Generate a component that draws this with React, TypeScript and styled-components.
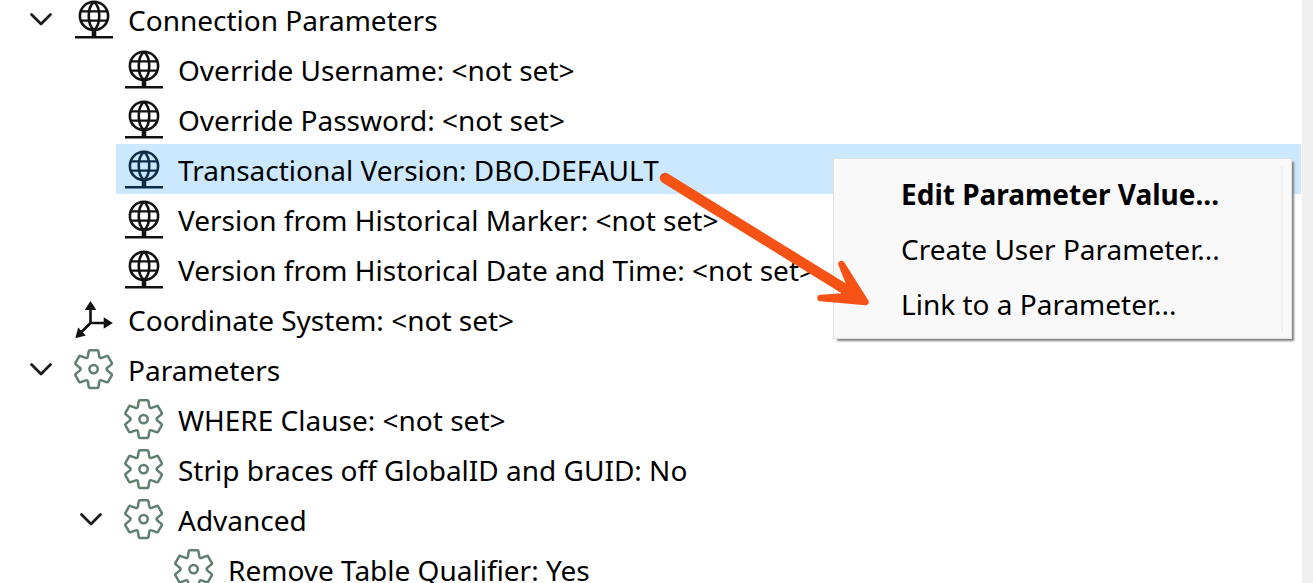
import React from "react";
import styled, { createGlobalStyle } from "styled-components";

const GlobalStyle = createGlobalStyle`
  * { box-sizing: border-box; }
  body {
    margin: 0;
    overflow: hidden;
    background: #ffffff;
    color: #000000;
    font-family: "Noto Sans", "Open Sans", sans-serif;
    font-size: 28px;
    line-height: 50px;
  }
`;

const Panel = styled.main`
  position: relative;
  display: flex;
  height: 100vh;
  overflow: hidden;
`;

const TreePane = styled.div`
  flex: 1;
  min-width: 0;
  overflow: hidden;
  padding: 0 1px 0 16px;
`;

const ScrollTrack = styled.div`
  flex: none;
  width: 11px;
  background: #f0f0f0;
`;

const Tree = styled.ul`
  list-style: none;
  margin: -6px 0 0;
  padding: 0;
`;

const Branch = styled.ul`
  list-style: none;
  margin: 0;
  padding: 0 0 0 50px;
`;

const Row = styled.div`
  display: flex;
  height: 50px;
`;

const ToggleSlot = styled.div`
  flex: none;
  width: 50px;
`;

const Toggle = styled.button`
  display: flex;
  align-items: center;
  justify-content: center;
  width: 50px;
  height: 50px;
  padding: 0;
  border: 0;
  background: none;
  color: #1a1a1a;
`;

const Entry = styled.div<{ $selected?: boolean }>`
  flex: 1;
  display: flex;
  align-items: center;
  gap: 14px;
  padding-left: 8px;
  white-space: nowrap;
  background: ${(p) => (p.$selected ? "#cce8ff" : "transparent")};
  color: ${(p) => (p.$selected ? "#0c2d48" : "#111111")};
`;

const Icon = styled.svg`
  flex: none;
  width: 40px;
  height: 40px;
  overflow: visible;
`;

const Label = styled.span`
  padding-top: 2px;
  color: #000000;
`;

const Menu = styled.div`
  position: absolute;
  left: 833px;
  top: 158px;
  width: 459px;
  padding: 7px 8px;
  border: 1px solid #e2e2e2;
  background: #f9f9f9;
  box-shadow: 3px 3px 2px -1px #808080;
`;

const MenuList = styled.div`
  display: flex;
  flex-direction: column;
  border-right: 2px solid #f0f0f0;
`;

const MenuItem = styled.button<{ $primary?: boolean }>`
  height: 55px;
  padding: 0 0 0 59px;
  border: 0;
  background: none;
  color: #000000;
  font: inherit;
  font-weight: ${(p) => (p.$primary ? 700 : 400)};
  line-height: 50px;
  text-align: left;
  white-space: nowrap;
`;

const Pointer = styled.svg`
  position: absolute;
  left: 650px;
  top: 160px;
  width: 230px;
  height: 160px;
  pointer-events: none;
`;

function Globe() {
  return (
    <Icon viewBox="0 0 40 40" fill="none" stroke="currentColor" strokeWidth="2.6" aria-hidden="true">
      <circle cx="20" cy="16.9" r="14.1" />
      <path d="M20 2.8C13 8.5 13 25.3 20 31M20 2.8C27 8.5 27 25.3 20 31" />
      <path d="M6.5 12.4H33.5M6.5 21.6H33.5" strokeWidth="2.2" />
      <path d="M20 31V38" strokeWidth="4.6" />
      <path d="M1 38.3H39" strokeWidth="2.6" />
    </Icon>
  );
}

function Axes() {
  return (
    <Icon viewBox="0 0 40 40" fill="currentColor" aria-hidden="true">
      <path d="M16.5 6V24H32M16.5 24L7 33.5" fill="none" stroke="currentColor" strokeWidth="2.6" />
      <path d="M16.5 2L22.3 11H10.7ZM38.9 24L29.7 29.8V18.2ZM1.3 39.2L4.2 28.6L11.8 36.6Z" />
    </Icon>
  );
}

const turn = (x: number, y: number, degrees: number) => {
  const a = (degrees * Math.PI) / 180;
  const px = 19.6 + x * Math.cos(a) - y * Math.sin(a);
  const py = 20.1 + x * Math.sin(a) + y * Math.cos(a);
  return `${px.toFixed(2)} ${py.toFixed(2)}`;
};

const gearOutline =
  [0, 60, 120, 180, 240, 300]
    .map(
      (d, i) =>
        `${i ? "" : `M${turn(-5.6, -13.2, 0)}`}L${turn(-4.9, -17.6, d)}Q${turn(-4.7, -18.9, d)} ${turn(-3.6, -18.9, d)}` +
        `L${turn(3.6, -18.9, d)}Q${turn(4.7, -18.9, d)} ${turn(4.9, -17.6, d)}L${turn(5.6, -13.2, d)}` +
        `Q${turn(5.8, -10.1, d)} ${turn(-5.6, -13.2, d + 60)}`
    )
    .join("") + "Z";

function Gear() {
  return (
    <Icon viewBox="0 0 40 40" fill="none" stroke="#5f806f" strokeWidth="2.5" strokeLinejoin="round" aria-hidden="true">
      <path d={gearOutline} />
      <circle cx="19.6" cy="20.1" r="4.2" />
    </Icon>
  );
}

const icons = { globe: Globe, axes: Axes, gear: Gear };

type Node = {
  label: string;
  icon: keyof typeof icons;
  selected?: boolean;
  children?: Node[];
};

const nodes: Node[] = [
  {
    label: "Connection Parameters",
    icon: "globe",
    children: [
      { label: "Override Username: <not set>", icon: "globe" },
      { label: "Override Password: <not set>", icon: "globe" },
      { label: "Transactional Version: DBO.DEFAULT", icon: "globe", selected: true },
      { label: "Version from Historical Marker: <not set>", icon: "globe" },
      { label: "Version from Historical Date and Time: <not set>", icon: "globe" },
    ],
  },
  { label: "Coordinate System: <not set>", icon: "axes" },
  {
    label: "Parameters",
    icon: "gear",
    children: [
      { label: "WHERE Clause: <not set>", icon: "gear" },
      { label: "Strip braces off GlobalID and GUID: No", icon: "gear" },
      {
        label: "Advanced",
        icon: "gear",
        children: [{ label: "Remove Table Qualifier: Yes", icon: "gear" }],
      },
    ],
  },
];

function TreeNode({ node }: { node: Node }) {
  const NodeIcon = icons[node.icon];
  return (
    <li>
      <Row>
        <ToggleSlot>
          {node.children && (
            <Toggle type="button" aria-expanded="true" aria-label={`Collapse ${node.label}`}>
              <svg width="24" height="14" viewBox="0 0 24 14" fill="none" stroke="currentColor" strokeWidth="2.8" strokeLinecap="round" strokeLinejoin="round">
                <path d="M2.5 2.5L12 12L21.5 2.5" />
              </svg>
            </Toggle>
          )}
        </ToggleSlot>
        <Entry $selected={node.selected}>
          <NodeIcon />
          <Label>{node.label}</Label>
        </Entry>
      </Row>
      {node.children && (
        <Branch>
          {node.children.map((child) => (
            <TreeNode key={child.label} node={child} />
          ))}
        </Branch>
      )}
    </li>
  );
}

export default function App() {
  return (
    <>
      <GlobalStyle />
      <Panel>
        <TreePane>
          <Tree>
            {nodes.map((node) => (
              <TreeNode key={node.label} node={node} />
            ))}
          </Tree>
        </TreePane>
        <ScrollTrack />
        <Menu role="menu">
          <MenuList>
            <MenuItem type="button" role="menuitem" $primary>Edit Parameter Value...</MenuItem>
            <MenuItem type="button" role="menuitem">Create User Parameter...</MenuItem>
            <MenuItem type="button" role="menuitem">Link to a Parameter...</MenuItem>
          </MenuList>
        </Menu>
        <Pointer viewBox="650 160 230 160" fill="#f75215" stroke="#f75215" strokeLinecap="round" strokeLinejoin="round" aria-hidden="true">
          <path d="M665 178L848 291" strokeWidth="10.5" />
          <path d="M841.5 264L865.5 302L820.5 298L843 296.5L849.5 284Z" strokeWidth="6.5" />
        </Pointer>
      </Panel>
    </>
  );
}
